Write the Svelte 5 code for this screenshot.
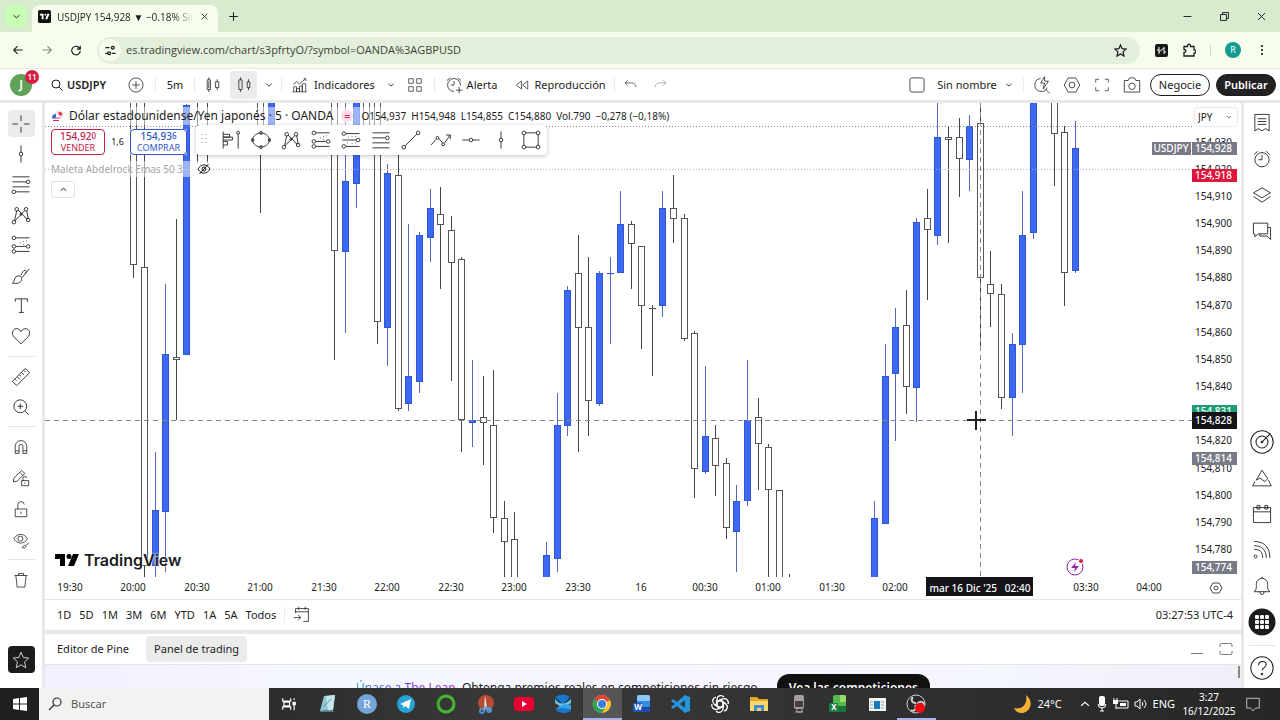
<script lang="ts">
	type Candle = [number, number, number, number, number, number];

	const ORIGIN_X = 45;
	const ORIGIN_Y = 103;
	const PLOT_HEIGHT = 474;
	const STEP = 10.58;

	let width = $state(1195);
	let axisX = $derived(width - 49);

	// slot, wick top, body top, body bottom, wick bottom, rising
	const candles: Candle[] = [
		[0, 90, 90, 265, 278, 0],
		[1, 90, 267, 566, 577, 0],
		[2, 452, 510, 566, 577, 1],
		[3, 284, 354, 512, 572, 1],
		[4, 219, 357, 360, 420, 0],
		[5, 104, 105, 355, 355, 1],
		[6, 90, 90, 91, 163, 0],
		[7, 90, 90, 91, 163, 0],
		[12, 90, 90, 130, 213, 0],
		[13, 90, 90, 125, 125, 1],
		[19, 90, 90, 251, 360, 0],
		[20, 90, 181, 252, 333, 1],
		[21, 90, 90, 184, 208, 1],
		[22, 90, 90, 130, 130, 0],
		[23, 90, 90, 322, 344, 0],
		[24, 164, 173, 328, 366, 1],
		[25, 155, 175, 409, 411, 0],
		[26, 224, 376, 404, 411, 1],
		[27, 232, 235, 382, 393, 1],
		[28, 189, 208, 238, 262, 1],
		[29, 187, 214, 225, 289, 0],
		[30, 216, 230, 263, 381, 0],
		[31, 257, 259, 420, 452, 0],
		[32, 360, 420, 423, 447, 1],
		[33, 376, 417, 423, 465, 0],
		[34, 370, 425, 518, 533, 0],
		[35, 501, 518, 542, 577, 0],
		[36, 512, 539, 590, 590, 0],
		[39, 542, 555, 590, 590, 1],
		[40, 393, 425, 559, 572, 1],
		[41, 286, 290, 426, 436, 1],
		[42, 235, 273, 328, 452, 0],
		[43, 257, 327, 401, 436, 0],
		[44, 271, 273, 404, 406, 1],
		[45, 257, 273, 274, 344, 1],
		[46, 191, 224, 273, 273, 1],
		[47, 221, 224, 244, 289, 0],
		[48, 246, 246, 306, 349, 0],
		[49, 305, 308, 309, 376, 0],
		[50, 191, 208, 306, 317, 1],
		[51, 175, 208, 219, 243, 0],
		[52, 214, 218, 339, 341, 0],
		[53, 331, 333, 469, 498, 0],
		[54, 366, 436, 472, 474, 1],
		[55, 425, 438, 466, 496, 0],
		[56, 458, 463, 528, 539, 0],
		[57, 485, 501, 532, 572, 1],
		[58, 360, 420, 501, 506, 1],
		[59, 398, 417, 444, 490, 0],
		[60, 444, 447, 490, 577, 0],
		[61, 490, 490, 590, 590, 0],
		[62, 574, 590, 591, 592, 0],
		[70, 501, 518, 590, 590, 1],
		[71, 344, 376, 524, 524, 1],
		[72, 308, 327, 374, 441, 1],
		[73, 290, 325, 387, 414, 0],
		[74, 218, 222, 388, 422, 1],
		[75, 189, 218, 230, 300, 0],
		[76, 90, 137, 236, 245, 1],
		[77, 126, 137, 140, 243, 0],
		[78, 118, 137, 159, 197, 0],
		[79, 115, 126, 160, 191, 1],
		[80, 90, 123, 278, 346, 0],
		[81, 251, 284, 294, 327, 0],
		[82, 284, 294, 398, 409, 0],
		[83, 333, 344, 398, 436, 1],
		[84, 191, 235, 345, 393, 1],
		[85, 90, 90, 233, 239, 1],
		[87, 90, 90, 134, 186, 0],
		[88, 126, 132, 273, 306, 0],
		[89, 121, 148, 271, 273, 1]
	];

	const slotX = (slot: number) => Math.floor(133.9 + slot * STEP - ORIGIN_X) + 0.5;
	const priceY = (price: number) => Math.round(196 + (910 - price) * 2.715) - ORIGIN_Y;

	const prices = [930, 920, 910, 900, 890, 880, 870, 860, 850, 840, 820, 810, 800, 790, 780];
	const times = [
		'19:30', '20:00', '20:30', '21:00', '21:30', '22:00', '22:30', '23:00', '23:30', '16',
		'00:30', '01:00', '01:30', '02:00', '', '', '03:30', '04:00'
	];
	const tags = [
		{ text: '154,928', y: 148, h: 13, fill: '#787b86' },
		{ text: '154,918', y: 175, h: 13, fill: '#e0153c' },
		{ text: '154,831', y: 411, h: 13, fill: '#1c9d75' },
		{ text: '154,828', y: 420, h: 17, fill: '#131318' },
		{ text: '154,814', y: 458, h: 13, fill: '#787b86' },
		{ text: '154,774', y: 567, h: 13, fill: '#787b86' }
	];

	const ring = (x: number, y: number, r: number) =>
		`M${x - r} ${y}a${r} ${r} 0 1 0 ${2 * r} 0a${r} ${r} 0 1 0 ${-2 * r} 0`;
	const hexagon = 'M8 3h12l6 11-6 11H8L2 14z' + ring(14, 14, 4.5);

	// Outline icons, 28 x 28
	const icons: Record<string, string> = {
		cross: 'M14 2v8M14 18v8M2 14h8M18 14h8',
		vline: 'M14 2v9.5M14 16.5V26' + ring(14, 14, 2.5),
		hline: 'M2 14h9.500M16.500 14H26' + ring(14, 14, 2.5),
		fib: 'M2 4h24M2 11h19M2 18h24M7 25h19' + ring(24, 11, 2.5) + ring(4, 25, 2.5),
		fibTop: 'M2 4h24M2 11h18M2 18h24M2 25h24' + ring(23, 11, 2.5),
		pattern: 'M5 22L8 8M10 7l9 9M10 18l9-10M22 8l2 11M6 22l4-5M18 16l5 4' + ring(8, 6, 2.5) + ring(21, 6, 2.5) + ring(4, 24, 2.5) + ring(24, 21, 2.5) + ring(14, 13, 1.5),
		forecast: 'M7 4h19M7 16h14M7 23h19M13 11h1M17 9h1M21 8h1M17 13h1' + ring(4, 4, 2.5) + ring(4, 16, 2.5) + ring(24, 16, 2.5) + ring(4, 23, 2.5),
		range: 'M7 5h19M2 14h19M7 23h19M10 10h1M15 9h1M20 9h1M9 18h1M15 19h1M20 18h1' + ring(4, 5, 2.5) + ring(24, 14, 2.5) + ring(4, 23, 2.5),
		brush: 'M2 24c3-2 2-6 5-9 4-3 9 0 8 4-1 5-7 6-13 5zM14 13c2-4 3-7 6-7l2 2-6 8M20 10l6-6',
		text: 'M6 8V4h17v4M14.500 4v19M11 23h7',
		heart: 'M14 25L4 15C-1 9 4 2 10 4c2 1 3 2 4 4 1-2 2-3 4-4 6-2 11 5 6 11z',
		ruler: 'M2 20L20 2l6 6L8 26zM6 17l2 2M9 14l3 3M12 11l2 2M15 8l3 3M18 5l2 2',
		zoom: ring(13, 13, 9) + 'M19.500 19.500L25 25M13 9v8M9 13h8',
		magnet: 'M5 24V13a9 9 0 0 1 18 0v11h-6V13a3 3 0 0 0-6 0v11zM5 20h6M17 20h6',
		pencilLock: 'M2 20l1-6L15 2l5 5L8 19zM12 5l5 5M15 18h11v8H15zM17 18v-3a3 3 0 0 1 6-1M20 21v2',
		lock: 'M5 14h18v12H5zM9 14V8a5 5 0 0 1 10-1M14 18v4',
		eye: 'M3 12c5-9 16-9 21 0-5 9-16 9-21 0z' + ring(13, 12, 4) + 'M16 26c1-4 5-5 6-2-1 2-3 3-6 2zM22 22l4-3',
		trash: 'M4 7h20M10 7V4h8v3M6 7l2 18h12l2-18',
		star: 'M14 2l3.500 8 8.500 1-6.500 6 2 9L14 21.500 6.500 26l2-9L2 11l8.500-1z',
		search: ring(12, 12, 8) + 'M18 18l7 7',
		plus: ring(14, 14, 11) + 'M14 8v12M8 14h12',
		bars: 'M5 6h5v15H5zM7.500 2v4M7.500 21v4M7.500 8v11M18 9h5v9h-5zM20.500 5v4M20.500 18v4',
		candles: 'M6 6h5v15H6zM8.500 2v4M8.500 21v4M19 9h4v9h-4zM21 5v4M21 18v4',
		chevron: 'M5 10l9 8 9-8',
		chevronUp: 'M5 18l9-8 9 8',
		indicators: 'M3 26V17h5v9M8 26v-6h5v6M13 26V16h5v10M18 26V12h6v14M1 26h25M2 13l6-5 5 4L24 3M20 3h4v4',
		grid: 'M3 3h8v8H3zM17 3h8v8h-8zM3 17h8v8H3zM17 17h8v8h-8z',
		alarm: ring(14, 15, 10) + 'M14 8v7h-5M3 8l5-5M20 3l5 5',
		alert: 'M24 15A10 10 0 1 0 14 24M14 8v6H9M3 7l5-4M20 3l5 4M22 17v10M17 22h10',
		replay: 'M13 7v14L4 14zM24 7v14l-9-7z',
		undo: 'M9 6l-5 5 5 5M4 11h12c5 0 8 3 8 8',
		redo: 'M19 6l5 5-5 5M24 11H12c-5 0-8 3-8 8',
		square: 'M6 3h16q3 0 3 3v16q0 3-3 3H6q-3 0-3-3V6q0-3 3-3z',
		quick: 'M12 4A10 10 0 1 0 22 18M19 20l7 7M18 1l-6 10h6l-2 9 8-12h-6z',
		settings: hexagon,
		full: 'M3 10V4h6M19 4h6v6M25 18v6h-6M9 24H3v-6',
		expand: 'M2 10V6q0-3 3-3h4M19 3h4q3 0 3 3v4M26 18v4q0 3-3 3h-4M9 25H5q-3 0-3-3v-4M9 3h10M9 25h10',
		camera: 'M2 7h6l2-4h8l2 4h6v18H2z' + ring(14, 16, 5),
		list: 'M4 2h20v23l-5-3-5 3-5-3-5 3zM8 8h12M8 12h12M8 16h12',
		layers: 'M2 11l12-7 12 7-12 7zM2 16l12 8 12-8',
		chat: 'M2 3h20v15H9l-5 4v-4H2zM22 9h4v17l-5-5H11v-3',
		target: ring(14, 14, 13) + ring(14, 14, 7) + ring(14, 14, 1) + 'M15 13l9-9',
		peak: 'M6 17L14 3l8 12-4 4-7-5zM4 19l-3 6h26l-4-8',
		calendar: 'M2 5h24v21H2zM2 11h24M7 2h4v5H7zM18 2h4v5h-4z',
		feed: ring(5, 23, 2) + 'M3 13c8 0 12 4 12 12M3 8c11 0 17 6 17 17M3 2c14 0 22 8 22 23',
		bell: 'M3 22c4-3 3-8 3-11 0-5 4-7 8-8 4 1 8 3 8 8 0 3-1 8 3 11zM11 22a3 4 0 0 0 6 0M14 3V1',
		help: ring(14, 14, 13) + 'M10 11c0-6 9-6 9-1 0 3-5 4-5 7' + ring(14, 21, 0.8),
		goto: 'M4 11V4h20v20h-8M4 9h20M9 1v5M19 1v5M1 18h11M8 14l4 4-4 4',
		flag: 'M3 2v24M3 6h9v4H3M3 10h13v4H3M3 16h6v5H3M24 6v20' + ring(24, 4, 2),
		ellipse: 'M2 14c2-13 22-13 24 0-2 13-22 13-24 0' + ring(2, 14, 2) + ring(26, 14, 2) + ring(14, 4, 2) + ring(14, 24, 2),
		trend: 'M6 22L22 6' + ring(4, 24, 2.5) + ring(24, 4, 2.5),
		path: 'M0 21l7-8M11 12l5 6M19 18l8-11M21 7h6v6' + ring(9, 11, 2) + ring(17, 20, 2),
		rect: 'M6 4h16M4 6v16M24 6v16M6 24h16' + ring(4, 4, 2.5) + ring(24, 4, 2.5) + ring(4, 24, 2.5) + ring(24, 24, 2.5),
		hidden: 'M2 14c6-11 18-11 24 0-6 11-18 11-24 0' + ring(14, 14, 4) + 'M5 24L23 4',
		back: 'M25 14H5M13 5l-9 9 9 9',
		forward: 'M3 14h20M15 5l9 9-9 9',
		reload: 'M24 4v8h-8M23 11A10 10 0 1 0 24 16',
		tune: 'M3 8h9M3 20h4M17 20h8' + ring(19, 8, 3) + ring(11, 20, 3),
		close: 'M5 5l18 18M23 5L5 23',
		add: 'M14 3v22M3 14h22',
		minimize: 'M4 14h20',
		restore: 'M4 9h15v15H4zM9 9V4h15v15h-5',
		puzzle: 'M4 7h7c-1-6 7-6 6 0h7v7c5-1 5 7 0 6v6H4v-7c5 0 5-6 0-6z',
		taskview: 'M3 4v5h14V4M3 24v-5h14v5M5 11v6h10v-6zM23 4v3M23 11v14M21 11h4v4h-4z',
		bubble: 'M3 4h22v17h-6l-5 5-4-5H3z'
	};

	const drawTools = ['cross', 'vline', 'fib', 'pattern', 'forecast', 'brush', 'text', 'heart'];
	const measureTools = ['ruler', 'zoom'];
	const lockTools = ['magnet', 'pencilLock', 'lock', 'eye'];
	const favourites = ['flag', 'ellipse', 'pattern', 'forecast', 'range', 'fibTop', 'trend', 'path', 'hline', 'vline', 'rect'];
	const sideTop = ['list', 'alarm', 'layers', 'chat'];
	const sideBottom = ['target', 'peak', 'calendar', 'feed', 'bell'];
	const ranges = ['1D', '5D', '1M', '3M', '6M', 'YTD', '1A', '5A', 'Todos'];
	const apps = ['taskview', 'notes', 'r', 'telegram', 'ring', 'snip', 'youtube', 'wave', 'chrome', 'word', 'code', 'gpt', 'files', 'mic', 'excel', 'window', 'obs'];
</script>

{#snippet icon(name: string, size = 20)}
	<svg class="icon" width={size} height={size} viewBox="0 0 28 28" aria-hidden="true">
		<path d={icons[name]} />
	</svg>
{/snippet}

<div class="screen">
	<div class="tabs">
		<button class="tab-search" aria-label="Buscar pestañas">{@render icon('chevron', 9)}</button>
		<div class="tab">
			<svg width="13" height="13" viewBox="0 0 14 14"><rect width="14" height="14" rx="2" fill="#111" /><path d="M2 4h4v6H4V6H2zM10 4h2.500L10 10H7.800z" fill="#fff" /><circle cx="8" cy="5" r="1" fill="#fff" /></svg>
			<span class="tab-title">USDJPY 154,928 ▼ −0.18% Sin nombre</span>
			<button class="bold-icon" aria-label="Cerrar pestaña">{@render icon('close', 9)}</button>
		</div>
		<button class="new-tab bold-icon" aria-label="Nueva pestaña">{@render icon('add', 11)}</button>
		<div class="window-buttons">
			<button aria-label="Minimizar">{@render icon('minimize', 11)}</button>
			<button aria-label="Restaurar">{@render icon('restore', 11)}</button>
			<button aria-label="Cerrar">{@render icon('close', 11)}</button>
		</div>
	</div>

	<div class="address-bar">
		<button class="nav bold-icon" aria-label="Atrás">{@render icon('back', 12)}</button>
		<button class="nav bold-icon muted" aria-label="Adelante">{@render icon('forward', 12)}</button>
		<button class="nav bold-icon" aria-label="Recargar">{@render icon('reload', 12)}</button>
		<div class="omnibox">
			<button class="site bold-icon" aria-label="Información del sitio">{@render icon('tune', 13)}</button>
			<input aria-label="Dirección" value="es.tradingview.com/chart/s3pfrtyO/?symbol=OANDA%3AGBPUSD" />
			<button class="bold-icon" aria-label="Favorito">{@render icon('star', 13)}</button>
		</div>
		<div class="extensions">
			<svg width="13" height="13" viewBox="0 0 13 13"><rect width="13" height="13" rx="2" fill="#171a16" /><path d="M4 3v7M9 3v7M4 8l5-4M2 6h2M9 8h2" stroke="#fff" fill="none" /></svg>
			<button class="bold-icon" aria-label="Extensiones">{@render icon('puzzle', 14)}</button>
			<i></i>
			<span class="profile">R</span>
			<svg width="4" height="14" viewBox="0 0 4 14"><circle cx="2" cy="3" r="1" /><circle cx="2" cy="7" r="1" /><circle cx="2" cy="11" r="1" /></svg>
		</div>
	</div>

	<header>
		<div class="avatar">J<span>11</span></div>
		<button class="symbol">{@render icon('search', 14)}<b>USDJPY</b></button>
		<button class="add" aria-label="Comparar">{@render icon('plus', 18)}</button>
		<i></i>
		<button class="interval">5m</button>
		<i></i>
		<button class="tool" aria-label="Barras">{@render icon('bars', 18)}</button>
		<button class="tool active" aria-label="Velas">{@render icon('candles', 18)}</button>
		<button class="small" aria-label="Tipo de gráfico">{@render icon('chevron', 8)}</button>
		<i></i>
		<button class="indicators">{@render icon('indicators', 16)}Indicadores</button>
		<button class="small" aria-label="Plantillas">{@render icon('chevron', 8)}</button>
		<button class="layouts" aria-label="Diseños">{@render icon('grid', 16)}</button>
		<i class="wide"></i>
		<button class="alert">{@render icon('alert', 18)}Alerta</button>
		<button class="replay">{@render icon('replay', 16)}Reproducción</button>
		<i></i>
		<button class="tool" aria-label="Deshacer">{@render icon('undo', 15)}</button>
		<button class="tool muted" aria-label="Rehacer">{@render icon('redo', 15)}</button>
		<div class="header-right">
			<button class="tool" aria-label="Diseño">{@render icon('square', 18)}</button>
			<button class="name">Sin nombre {@render icon('chevron', 8)}</button>
			<i></i>
			<button class="tool" aria-label="Búsqueda rápida">{@render icon('quick', 18)}</button>
			<button class="tool" aria-label="Configuración">{@render icon('settings', 18)}</button>
			<button class="tool" aria-label="Pantalla completa">{@render icon('full', 16)}</button>
			<button class="tool" aria-label="Captura">{@render icon('camera', 18)}</button>
			<button class="pill">Negocie</button>
			<button class="pill dark">Publicar</button>
		</div>
	</header>

	<div class="workspace">
		<aside class="left-bar">
			<div class="group draw">
				{#each drawTools as name, i}
					<button class:active={i === 0} aria-label={name}>{@render icon(name)}</button>
				{/each}
			</div>
			<hr />
			<div class="group measure">
				{#each measureTools as name}
					<button aria-label={name}>{@render icon(name)}</button>
				{/each}
			</div>
			<hr />
			<div class="group locks">
				{#each lockTools as name}
					<button aria-label={name}>{@render icon(name, 18)}</button>
				{/each}
			</div>
			<hr />
			<button aria-label="Eliminar">{@render icon('trash', 18)}</button>
			<button class="favourite" aria-label="Favoritos">{@render icon('star', 18)}</button>
		</aside>

		<main>
			<section class="chart" bind:clientWidth={width}>
				<svg class="plot" width="100%" height="496">
					<defs>
						<clipPath id="pane"><rect width={axisX} height={PLOT_HEIGHT} /></clipPath>
					</defs>
					<g clip-path="url(#pane)">
						{#each candles as [slot, high, top, bottom, low, up]}
							<g class={up ? 'up' : 'down'}>
								<path d="M{slotX(slot)} {high - ORIGIN_Y}V{top - ORIGIN_Y}M{slotX(slot)} {bottom - ORIGIN_Y}V{low - ORIGIN_Y}" />
								<rect x={slotX(slot) - 3} y={top - ORIGIN_Y + 0.5} width="6" height={Math.max(bottom - top - 1, 0.1)} />
							</g>
						{/each}
						<path class="dots" d="M0 23.500H{axisX}" />
						<path class="dots red" d="M0 66.500H{axisX}" />
						<path class="crosshair" d="M0 317.500H{axisX}M935.500 0V474" />
						<path class="pointer" d="M922 317H941M931 308V327" />
					</g>

					{#each prices as price}
						<text x={axisX + 40} y={priceY(price) + 4} text-anchor="end">154,{price}</text>
					{/each}
					{#each tags as tag}
						<rect x={axisX} y={tag.y - ORIGIN_Y - Math.floor(tag.h / 2)} width="45" height={tag.h} fill={tag.fill} />
						<text class="tag" x={axisX + 40} y={tag.y - ORIGIN_Y + 4} text-anchor="end">{tag.text}</text>
					{/each}
					<rect x={axisX - 40} y="39" width="39" height="13" fill="#787b86" />
					<text class="tag" x={axisX - 21} y="49" text-anchor="middle">USDJPY</text>

					{#each times as time, i}
						<text x={Math.round(25 + i * 63.47)} y="488" text-anchor="middle">{time}</text>
					{/each}
					<rect x="881" y="474" width="107" height="19" fill="#131318" />
					<text class="tag" x="935" y="489" text-anchor="middle" xml:space="preserve">mar 16 Dic '25&#160;&#160; 02:40</text>

					<g class="event" transform="translate(1030 464)">
						<circle r="8" />
						<path d="M1-5l-5 6h4l-1 4 5-6h-4z" />
						<circle class="dot" cx="6" cy="-6" r="2.500" />
					</g>
					<g class="axis-settings" transform="translate({axisX + 18} 479)">
						<path d="M3 1h6l3 5-3 5H3L0 6z" /><circle cx="6" cy="6" r="2" />
					</g>
				</svg>

				<div class="legend">
					<div class="legend-title">
						<svg width="13" height="13" viewBox="0 0 13 13"><circle cx="8" cy="5" r="4.500" fill="#f4dfe3" /><circle cx="9" cy="4" r="2" fill="#d8334a" /><circle cx="5" cy="8" r="4.500" fill="#fff" /><path d="M1 8h8M2 10.500h6" stroke="#d8334a" /><path d="M1 8a4 4 0 0 1 4-4v4z" fill="#2f6fd0" /></svg>
						<span class="instrument">Dólar estadounidense/Yen japonés · 5 · OANDA</span>
						<span class="equal">=</span>
						<span class="values"><span>O154,937</span><span>H154,948</span><span>L154,855</span><span>C154,880</span><span>Vol.790</span><span>−0,278 (−0,18%)</span></span>
					</div>
					<div class="quotes">
						<button class="sell"><b>154,92<sup>0</sup></b>VENDER</button>
						<span>1,6</span>
						<button class="buy"><b>154,93<sup>6</sup></b>COMPRAR</button>
					</div>
					<div class="study"><span>Maleta Abdelrock Emas 50 3</span>{@render icon('hidden', 14)}</div>
					<button class="collapse" aria-label="Contraer">{@render icon('chevronUp', 9)}</button>
				</div>

				<div class="favourites">
					<svg width="6" height="12" viewBox="0 0 6 12"><path d="M1 0v12M5 0v12" stroke="#999" stroke-dasharray="1 3" /></svg>
					{#each favourites as name}
						<button aria-label={name}>{@render icon(name)}</button>
					{/each}
				</div>

				<label class="currency">
					<select aria-label="Moneda"><option>JPY</option></select>
					{@render icon('chevron', 6)}
				</label>

				<div class="brand">
					<svg width="24" height="12" viewBox="0 0 24 12"><path d="M0 0h10v12H5V5H0zM18 0h6l-5 12h-6z" /><circle cx="14" cy="2.500" r="2.500" /></svg>
					<span>TradingView</span>
				</div>
			</section>

			<div class="range-bar">
				{#each ranges as range}
					<button>{range}</button>
				{/each}
				<i></i>
				<button aria-label="Ir a">{@render icon('goto', 18)}</button>
				<span>03:27:53 UTC-4</span>
			</div>

			<section class="panel">
				<div class="panel-tabs">
					<button>Editor de Pine</button>
					<button class="active">Panel de trading</button>
					<div class="panel-actions">
						<button class="lower" aria-label="Minimizar panel"></button>
						<button aria-label="Maximizar panel">{@render icon('expand', 14)}</button>
					</div>
				</div>
				<div class="promo">
					<p><a href="#leap">Únase a The Leap.</a> Obtenga premios reales en competiciones sin riesgo.</p>
					<button>Vea las competiciones</button>
					<div class="scroll-thumb"></div>
				</div>
			</section>
		</main>

		<aside class="right-bar">
			{#each sideTop as name}
				<button aria-label={name}>{@render icon(name)}</button>
			{/each}
			<div class="side-bottom">
				{#each sideBottom as name}
					<button aria-label={name}>{@render icon(name, name === 'target' ? 24 : 20)}</button>
				{/each}
				<button aria-label="Productos">
					<svg width="28" height="28" viewBox="0 0 28 28"><circle cx="14" cy="14" r="13.500" fill="#1c1c1e" />{#each [7, 12, 17] as x}{#each [7, 12, 17] as y}<rect {x} {y} width="4" height="4" rx="1" fill="#fff" />{/each}{/each}</svg>
				</button>
				<hr />
				<button aria-label="Ayuda">{@render icon('help', 24)}</button>
			</div>
		</aside>
	</div>

	<footer>
		<button class="start" aria-label="Inicio">
			<svg width="14" height="14" viewBox="0 0 14 14"><path d="M0 2l6-1v5.500H0zM7 1l7-1v6.500H7zM0 7.500h6V13l-6-1zM7 7.500h7V14l-7-1z" fill="#fff" /></svg>
		</button>
		<label class="search">
			<svg class="icon" width="14" height="14" viewBox="0 0 14 14"><circle cx="9" cy="5" r="4" /><path d="M6 8l-5 5" /></svg>
			<input placeholder="Buscar" />
		</label>
		<div class="apps">
			{#each apps as app}
				<button class:current={app === 'chrome'} class:running={app === 'chrome' || app === 'obs'} aria-label={app}>
					{#if app === 'taskview'}
						{@render icon('taskview', 16)}
					{:else}
						<svg width="20" height="20" viewBox="0 0 20 20">
							{#if app === 'notes'}
								<path d="M6 2l11-1-2 15-13 1z" fill="#8fc7d4" /><path d="M8 2l9-1-2 15-5 1z" fill="#c5e5e8" /><path d="M2 17l13-1 1 2H3z" fill="#557c86" /><path d="M5 13l8-8" stroke="#4c98aa" />
							{:else if app === 'r'}
								<circle cx="10" cy="10" r="10" fill="#75a4d9" /><text class="serif" x="10" y="14" text-anchor="middle">R</text>
							{:else if app === 'telegram'}
								<circle cx="10" cy="10" r="9" fill="#27a1d8" /><path d="M4 10l11-5-2 10-4-3-2 2v-3z" fill="#fff" />
							{:else if app === 'ring'}
								<circle cx="10" cy="10" r="8" fill="none" stroke="#48b734" stroke-width="3" /><path d="M4 3a9 9 0 0 0-3 10" fill="none" stroke="#1b6f20" stroke-width="2" stroke-dasharray="1 1" />
							{:else if app === 'snip'}
								<circle cx="11" cy="9" r="8" fill="#b84c30" /><path d="M10 1l2 13-3 1z" fill="#e5e9ed" /><path d="M9 12l6 4" stroke="#69a9e2" stroke-width="2" /><circle cx="7" cy="17" r="2" fill="none" stroke="#4b94d7" stroke-width="2" /><circle cx="14" cy="16" r="2" fill="none" stroke="#4b94d7" stroke-width="2" />
							{:else if app === 'youtube'}
								<rect y="3" width="20" height="14" rx="3" fill="#e80032" /><path d="M8 7l5 3-5 3z" fill="#fff" />
							{:else if app === 'wave'}
								<path d="M2 3q8-5 15 0l-7 7 8 7q-8 4-15 0l7-7z" fill="#1676d1" /><path d="M2 5q7 9 16 0v4q-8 7-16 0z" fill="#65c5ef" /><path d="M2 16q7-8 16-5v5q-9-4-16 0z" fill="#38a3e5" />
							{:else if app === 'chrome'}
								<circle cx="10" cy="10" r="9" fill="#f8c62c" /><path d="M10 10L2 6a9 9 0 0 1 16 0z" fill="#df4637" /><path d="M10 10L2 5a9 9 0 0 0 8 14l4-7z" fill="#35a154" /><circle cx="10" cy="10" r="5" fill="#fff" /><circle cx="10" cy="10" r="4" fill="#377fdf" />
							{:else if app === 'word'}
								<rect x="5" y="1" width="13" height="17" rx="2" fill="#318be5" /><path d="M5 3q0-2 2-2h9q2 0 2 2v4H5z" fill="#8ac9fa" /><path d="M5 13h13v3q0 2-2 2H5z" fill="#2149a9" /><rect x="1" y="9" width="9" height="9" rx="1" fill="#1958ba" /><text class="logo" x="6" y="16" text-anchor="middle">W</text>
							{:else if app === 'code'}
								<path d="M14 1l5 2v14l-5 2-8-7-4 3-2-2 4-3-4-3 2-2 4 3zM14 6l-5 4 5 4z" fill="#2396dc" fill-rule="evenodd" />
							{:else if app === 'gpt'}
								<g fill="none" stroke="#fff" stroke-width="1.300">{#each [0, 60, 120, 180, 240, 300] as a}<path transform="rotate({a} 10 10)" d="M7 11V5a4 4 0 0 1 7-2M7 8l3-2 5 3" />{/each}</g>
							{:else if app === 'files'}
								<path d="M1 3h7l2 2h9v12H1z" fill="#e5a823" /><path d="M1 7h18v10H1z" fill="#f9d76c" /><path d="M5 17v-6h10v6h-3v-3H8v3z" fill="#408fd0" />
							{:else if app === 'mic'}
								<rect x="5" y="1" width="10" height="14" rx="2" fill="#a1a1a1" /><rect x="6" y="7" width="8" height="6" fill="#4b3c3c" /><path d="M8 15v3h5v-3M6 18h8" stroke="#aaa" fill="none" />
							{:else if app === 'excel'}
								<rect x="5" y="1" width="13" height="17" rx="2" fill="#56b94b" /><path d="M12 1h4q2 0 2 2v5h-6z" fill="#98dc70" /><path d="M5 12h13v4q0 2-2 2H5z" fill="#16733b" /><rect x="1" y="9" width="9" height="9" rx="1" fill="#187c43" /><text class="logo" x="6" y="16" text-anchor="middle">X</text>
							{:else if app === 'window'}
								<path d="M2 4h17v13H2z" fill="#eef3f5" /><path d="M7 7h6v8H7z" fill="#1677ba" /><path d="M3 8h3M3 11h3M3 14h3M14 8h3M14 11h3M14 14h3" stroke="#92a3ad" />
							{:else}
								<circle cx="10" cy="10" r="9" fill="#292729" stroke="#d0d0d0" /><path d="M10 9c-5 0-5-4-3-6M11 10c3-4 7-2 7 1M9 11c2 4-1 7-4 5" fill="none" stroke="#ccc" stroke-width="2" /><circle cx="14" cy="14" r="5" fill="#f00813" />
							{/if}
						</svg>
					{/if}
				</button>
			{/each}
		</div>
		<div class="tray">
			<svg width="20" height="20" viewBox="0 0 20 20"><path d="M13 1c8 6 5 17-4 18-4 0-7-2-8-5 8 2 14-4 12-13z" fill="#f5af35" /></svg>
			<span class="weather">24°C</span>
			<span class="bold-icon">{@render icon('chevronUp', 12)}</span>
			<svg width="12" height="16" viewBox="0 0 12 16"><rect x="3" width="6" height="10" rx="2" fill="#fff" /><path d="M2 8q0 4 4 4t4-4M6 12v3M4 15h4" stroke="#fff" fill="none" /></svg>
			<svg width="16" height="14" viewBox="0 0 16 14"><path d="M5 4h10v7H3" stroke="#fff" fill="none" /><path d="M7 6h6v3H7zM0 3h5v4H0z" fill="#fff" /><path d="M1 1v2M4 1v2M3 7v5" stroke="#fff" /></svg>
			<svg width="14" height="14" viewBox="0 0 14 14"><path d="M1 5h2l3-3v10L3 9H1zM8 5q2 2 0 4M10 3q4 4 0 8" stroke="#fff" fill="none" /></svg>
			<span>ENG</span>
			<div class="clock"><span>3:27</span><span>16/12/2025</span></div>
			{@render icon('bubble', 16)}
		</div>
	</footer>
</div>

<style>
	:global(body) {
		margin: 0;
	}
	.screen {
		display: flex;
		flex-direction: column;
		height: 100vh;
		overflow: hidden;
		background: #e8e8e8;
		color: #1c1c1e;
		font-family: 'Noto Sans', 'Open Sans', sans-serif;
		font-size: 11px;
		line-height: 16px;
	}
	button,
	input,
	select {
		font: inherit;
		color: inherit;
		background: none;
		border: 0;
		padding: 0;
		min-width: 0;
	}
	button {
		display: flex;
		align-items: center;
		justify-content: center;
		flex-shrink: 0;
		white-space: nowrap;
	}
	svg {
		flex-shrink: 0;
	}
	.icon {
		fill: none;
		stroke: currentColor;
		stroke-width: 1.2;
	}
	.bold-icon .icon {
		stroke-width: 2.6;
	}
	.muted {
		opacity: 0.5;
	}

	.tabs {
		display: flex;
		align-items: center;
		flex: 0 0 32px;
		background: #d8ebcf;
	}
	.tab-search {
		width: 22px;
		height: 22px;
		margin: 0 5px;
		border-radius: 8px;
		background: #c9ffb5;
	}
	.tab-search .icon,
	.small .icon,
	.name .icon {
		stroke-width: 3;
	}
	.tab {
		display: flex;
		align-items: center;
		align-self: flex-end;
		gap: 6px;
		box-sizing: border-box;
		width: 186px;
		height: 27px;
		padding: 0 9px 4px 6px;
		border-radius: 8px 8px 0 0;
		background: #f6fdec;
	}
	.tab-title {
		flex: 1;
		overflow: hidden;
		font-family: 'Open Sans', sans-serif;
		font-size: 10px;
		white-space: nowrap;
		mask-image: linear-gradient(90deg, #000 85%, transparent);
	}
	.new-tab {
		margin-left: 10px;
	}
	.window-buttons {
		display: flex;
		margin-left: auto;
	}
	.window-buttons button {
		width: 37px;
	}
	.window-buttons .icon {
		stroke-width: 2.4;
	}

	.address-bar {
		display: flex;
		align-items: center;
		flex: 0 0 37px;
		box-sizing: border-box;
		padding: 0 4px 0 3px;
		background: #f6fdec;
		border-bottom: 1px solid #e4e8df;
	}
	.nav {
		width: 29px;
	}
	.omnibox {
		display: flex;
		align-items: center;
		flex: 1;
		height: 27px;
		margin-left: 7px;
		padding-right: 13px;
		border-radius: 14px;
		background: #e3eedb;
	}
	.omnibox input {
		flex: 1;
		color: #3c4438;
		font-family: 'Open Sans', sans-serif;
		font-size: 11px;
	}
	.site {
		width: 22px;
		height: 22px;
		margin: 0 5px 0 2px;
		border-radius: 50%;
		background: #f6fdec;
	}
	.extensions {
		display: flex;
		align-items: center;
		gap: 14px;
		margin: 0 12px 0 15px;
	}
	.extensions i {
		width: 1px;
		height: 12px;
		background: #c9dfbd;
	}
	.profile {
		width: 16px;
		margin-right: 5px;
		border-radius: 50%;
		background: #159c90;
		color: #fff;
		font-size: 9px;
		text-align: center;
	}

	header {
		display: flex;
		align-items: center;
		flex: 0 0 31px;
		margin-bottom: 3px;
		background: #fff;
	}
	header button {
		height: 28px;
	}
	header i {
		width: 1px;
		height: 16px;
		background: #ebebeb;
	}
	header .wide {
		margin: 0 1px 0 7px;
	}
	.avatar {
		position: relative;
		width: 22px;
		margin: 0 18px 0 10px;
		border-radius: 50%;
		background: #5da257;
		color: #fff;
		font-size: 12px;
		font-weight: 600;
		line-height: 22px;
		text-align: center;
	}
	.avatar span {
		position: absolute;
		top: -4px;
		right: -7px;
		width: 14px;
		border-radius: 50%;
		background: #d91d41;
		font-size: 8px;
		line-height: 14px;
	}
	.symbol {
		gap: 3px;
		width: 56px;
	}
	.symbol .icon {
		stroke-width: 2;
	}
	.symbol b {
		font-weight: 600;
	}
	.add {
		width: 38px;
		margin-left: 11px;
	}
	.interval {
		width: 38px;
	}
	.tool {
		width: 30px;
	}
	header > .interval + i {
		margin-right: 3px;
	}
	.tool.active {
		width: 27px;
		margin-left: 2px;
		border-radius: 4px;
		background: #ebebeb;
	}
	.small {
		width: 24px;
	}
	.indicators {
		justify-content: flex-start;
		gap: 6px;
		width: 87px;
		margin-left: 10px;
	}
	.layouts {
		width: 24px;
	}
	.alert {
		gap: 4px;
		width: 70px;
	}
	.replay {
		gap: 4px;
		width: 108px;
	}
	.header-right {
		display: flex;
		align-items: center;
		margin: 0 1px 0 auto;
	}
	.name {
		gap: 8px;
		width: 86px;
		margin-right: 5px;
	}
	.header-right i {
		margin-right: 3px;
	}
	.header-right .pill {
		box-sizing: border-box;
		width: 60px;
		height: 22px;
		margin: 0 3px;
		border: 1px solid #1c1c1e;
		border-radius: 11px;
	}
	.header-right .dark {
		background: #222224;
		color: #fff;
		font-weight: 600;
	}

	.workspace {
		display: grid;
		grid-template-columns: 42px 1fr 36px;
		gap: 3px;
		flex: 1;
		min-height: 0;
	}
	.left-bar,
	.right-bar {
		display: flex;
		flex-direction: column;
		align-items: center;
		min-height: 0;
		background: #fff;
	}
	.left-bar {
		padding: 7px 0 15px;
	}
	.left-bar button {
		width: 27px;
		height: 27px;
		border-radius: 4px;
	}
	.left-bar button.active {
		background: #ebebeb;
	}
	.left-bar .favourite {
		margin-top: auto;
		background: #1c1c1e;
		color: #fff;
	}
	.group {
		display: flex;
		flex-direction: column;
		justify-content: space-between;
	}
	.draw {
		height: 240px;
	}
	.measure {
		height: 57px;
	}
	.locks {
		height: 120px;
	}
	hr {
		width: 27px;
		height: 1px;
		margin: 6px 0;
		border: 0;
		background: #e4e4e4;
	}

	main {
		display: flex;
		flex-direction: column;
		min-width: 0;
		min-height: 0;
	}
	.chart {
		position: relative;
		flex-shrink: 0;
		background: #fff;
		overflow: hidden;
	}
	.plot {
		display: block;
		font-size: 10px;
	}
	.plot text {
		fill: #1c1c1e;
	}
	.plot .tag {
		fill: #fff;
		font-weight: 500;
	}
	.plot path,
	.axis-settings {
		fill: none;
		stroke: #444;
	}
	.down rect {
		fill: #fff;
		stroke: #555;
	}
	.up rect {
		fill: #3d68f2;
		stroke: #2f56d6;
	}
	.plot .up path {
		stroke: #5468c4;
	}
	.plot .dots {
		stroke: #888;
		stroke-dasharray: 1 2;
	}
	.plot .red {
		stroke: #cbaab4;
	}
	.plot .crosshair {
		stroke: #888;
		stroke-dasharray: 5 4;
	}
	.plot .pointer {
		stroke: #222;
		stroke-width: 2;
	}
	.event {
		fill: #fff;
		stroke: #8e24aa;
	}
	.plot .event path {
		fill: #8e24aa;
		stroke: none;
	}
	.event .dot {
		fill: #d91d41;
		stroke: #fff;
	}

	.legend {
		position: absolute;
		top: 4px;
		left: 6px;
		display: flex;
		flex-direction: column;
		align-items: flex-start;
	}
	.legend-title {
		display: flex;
		align-items: center;
		gap: 5px;
		height: 18px;
		background: rgba(255, 255, 255, 0.5);
		white-space: nowrap;
	}
	.instrument {
		font-size: 12px;
	}
	.equal {
		width: 12px;
		margin: 0 3px;
		border-radius: 50%;
		background: #fbdce8;
		color: #d91d61;
		line-height: 12px;
		text-align: center;
	}
	.values {
		display: flex;
		gap: 5px;
		font-size: 10px;
	}
	.quotes {
		display: flex;
		align-items: center;
		margin-top: 4px;
		background: rgba(255, 255, 255, 0.5);
		font-size: 9px;
	}
	.quotes > span {
		width: 25px;
		text-align: center;
	}
	.quotes button {
		flex-direction: column;
		box-sizing: border-box;
		width: 54px;
		height: 26px;
		border: 1px solid;
		border-radius: 4px;
		background: #fff;
		line-height: 11px;
	}
	.quotes .buy {
		width: 57px;
		color: #3157c8;
	}
	.quotes .sell {
		color: #c62045;
	}
	.quotes b {
		font-size: 10px;
		font-weight: 500;
	}
	.quotes sup {
		font-size: 8px;
		line-height: 1px;
		vertical-align: 1px;
	}
	.study {
		display: flex;
		align-items: center;
		gap: 12px;
		margin-top: 6px;
		background: rgba(255, 255, 255, 0.5);
		font-size: 10px;
	}
	.study span {
		width: 134px;
		overflow: hidden;
		color: #a6a6a6;
		white-space: nowrap;
	}
	.study .icon {
		stroke-width: 2;
	}
	.collapse {
		box-sizing: border-box;
		width: 24px;
		height: 17px;
		margin-top: 4px;
		border: 1px solid #e2e2e2;
		border-radius: 3px;
		background: #fff;
	}
	.collapse .icon,
	.currency .icon {
		stroke-width: 3;
	}
	.favourites {
		position: absolute;
		top: 22px;
		left: 151px;
		display: flex;
		align-items: center;
		box-sizing: border-box;
		height: 30px;
		padding: 0 1px 0 5px;
		border-radius: 4px;
		background: #fff;
		box-shadow: 0 1px 4px rgba(0, 0, 0, 0.25);
	}
	.favourites > svg {
		margin-right: 9px;
	}
	.favourites button {
		width: 30px;
	}
	.currency {
		position: absolute;
		top: 4px;
		right: 3px;
		display: flex;
		align-items: center;
		box-sizing: border-box;
		width: 44px;
		height: 20px;
		padding: 0 5px 0 3px;
		border: 1px solid #ebebeb;
		border-radius: 4px;
		background: #fff;
		font-size: 10px;
	}
	.currency select {
		flex: 1;
		appearance: none;
	}
	.brand {
		position: absolute;
		left: 10px;
		bottom: 30px;
		display: flex;
		align-items: center;
		gap: 5px;
		font-family: Inter, sans-serif;
		font-size: 16px;
		font-weight: 600;
		line-height: 18px;
		text-shadow: 0 0 2px #fff, 0 0 2px #fff;
	}

	.range-bar {
		display: flex;
		align-items: center;
		gap: 8px;
		flex: 0 0 31px;
		box-sizing: border-box;
		padding: 0 8px 0 12px;
		border-top: 1px solid #e4e4e4;
		background: #fff;
		font-size: 11px;
	}
	.range-bar i {
		width: 1px;
		height: 16px;
		background: #ebebeb;
	}
	.range-bar span {
		margin-left: auto;
	}
	.panel {
		display: flex;
		flex-direction: column;
		flex: 1;
		min-height: 0;
		margin-top: 4px;
	}
	.panel-tabs {
		display: flex;
		align-items: center;
		gap: 9px;
		flex: 0 0 30px;
		padding: 0 8px 0 4px;
		border-bottom: 1px solid #e4e4e4;
		background: #fff;
	}
	.panel-tabs button {
		height: 26px;
		padding: 0 8px;
		border-radius: 4px;
	}
	.panel-tabs .active {
		background: #ebebeb;
	}
	.panel-tabs .panel-actions {
		display: flex;
		align-items: center;
		gap: 16px;
		margin-left: auto;
	}
	.panel-actions button {
		padding: 0;
	}
	.panel-tabs .lower {
		width: 12px;
		height: 10px;
		border-bottom: 1px solid #777;
		border-radius: 0;
	}
	.promo {
		position: relative;
		display: flex;
		align-items: flex-start;
		justify-content: center;
		gap: 16px;
		flex: 1;
		min-height: 0;
		padding-top: 9px;
		overflow: hidden;
		background: linear-gradient(100deg, #f3effd, #f5f8ff 25%, #f8f5ff 55%, #f4f6fe 80%, #f1eef8);
		font-size: 12px;
	}
	.promo p {
		margin: 6px 0 0;
	}
	.promo a {
		background: linear-gradient(90deg, #2f9fd0, #6d3be0 50%, #b026e0);
		background-clip: text;
		color: transparent;
		text-decoration: none;
	}
	.promo button {
		height: 28px;
		padding: 0 12px;
		border-radius: 12px;
		background: #111;
		color: #fff;
		font-weight: 600;
	}
	.scroll-thumb {
		position: absolute;
		top: 1px;
		right: 1px;
		width: 2px;
		height: 12px;
		background: #888;
	}

	.right-bar {
		padding-top: 2px;
	}
	.right-bar button {
		width: 36px;
		height: 36px;
	}
	.side-bottom {
		display: flex;
		flex-direction: column;
		align-items: center;
		margin-top: auto;
		padding-bottom: 2px;
	}
	.right-bar hr {
		margin: 5px 0 4px;
	}

	footer {
		display: flex;
		align-items: stretch;
		flex: 0 0 32px;
		background: linear-gradient(90deg, #1f1f1f, #393939 40%, #272727);
		color: #fff;
	}
	.start {
		width: 39px;
	}
	.search {
		display: flex;
		align-items: center;
		gap: 9px;
		box-sizing: border-box;
		width: 230px;
		padding-left: 9px;
		background: #f2f2f2;
		color: #333;
		font-size: 11px;
	}
	.search input {
		width: 160px;
	}
	.search input::placeholder {
		color: #555;
	}
	.apps {
		display: grid;
		grid-template-columns: repeat(17, 1fr);
		width: 667px;
	}
	.apps .icon {
		stroke-width: 2;
	}
	.apps .current {
		background: #555;
	}
	.apps .running {
		box-shadow: inset 0 -2px #a9b4e8;
	}
	.serif {
		fill: #fff;
		font-family: 'Liberation Serif', serif;
		font-size: 12px;
	}
	.logo {
		fill: #fff;
		font-size: 8px;
		font-weight: 700;
	}
	.tray {
		display: flex;
		align-items: center;
		gap: 5px;
		margin-left: auto;
		padding-right: 19px;
	}
	.weather {
		width: 36px;
	}
	.tray .bold-icon {
		display: flex;
	}
	.clock {
		display: flex;
		flex-direction: column;
		align-items: center;
		width: 54px;
		margin: 0 4px 0 2px;
		font-size: 10px;
		line-height: 14px;
	}
</style>
